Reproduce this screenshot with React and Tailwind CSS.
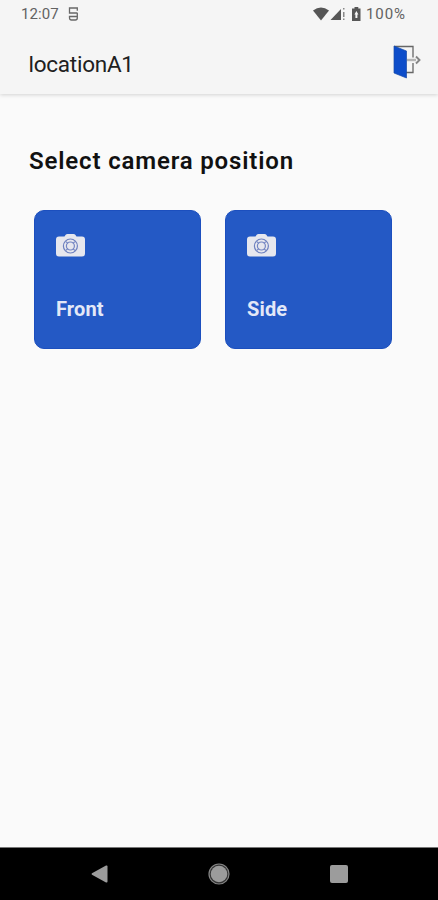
function Camera() {
  return (
    <svg className="block h-6 w-[29px]" viewBox="0 0 29 24" fill="none">
      <path d="M3 2.500h5.500l1.200-1.700Q10.300 0 11.500 0h6Q18.700 0 19.300.8l1.200 1.700H26q3 0 3 3V19.500q0 3-3 3H3q-3 0-3-3V5.500q0-3 3-3Z" fill="#e6e7ee" />
      <circle cx="14.4" cy="12" r="7" stroke="#6d80bf" strokeWidth="1.2" />
      <circle cx="14.4" cy="12" r="4" stroke="#7385c2" strokeWidth="1.2" />
      <path d="m10 7.600 2 2m5 5 2 2M18.800 7.600l-2 2M10 16.400l2-2" stroke="#7385c2" strokeWidth="1.1" />
    </svg>
  );
}

function Card({ label }) {
  return (
    <button className="flex h-[139px] w-[167px] flex-col items-start rounded-[10px] border border-[#1c4fbe] bg-[#2459c5] pt-[23px] pl-[21px] text-left">
      <Camera />
      <span className="mt-[39px] text-[20px] leading-6 font-bold tracking-[0.15px] text-[#e3e8f7]">{label}</span>
    </button>
  );
}

function StatusBar() {
  return (
    <div className="flex h-7 items-center justify-between pr-[31px] pl-[21px] text-[15px] leading-none text-[#626262]">
      <div className="flex items-center gap-[9px]">
        <span className="w-[38px] tracking-[0.1px]">12:07</span>
        <svg className="h-[14px] w-[11px]" viewBox="0 0 11 14" fill="none" stroke="#686868" strokeWidth="1.3">
          <path d="M9.300 3.800V1H1.500v5h8M9.300 6v5q0 2-2 2H3.500q-2 0-2-2V9.500h7.800" />
        </svg>
      </div>
      <div className="flex items-center">
        <svg className="h-[14px] w-[54px]" viewBox="0 0 54 14" fill="#565656">
          <path d="M0 3.500Q8-2.300 16 3.500L8 13.500Z" />
          <path d="M17.500 13 28 2V13Z" />
          <path d="M30 1h1.500v1.500H30zM30 5h1.500v5H30zM30 11.500h1.500V13H30z" fill="#888888" />
          <path fillRule="evenodd" d="M41.500 0h3.800v1.500h2.200V14h-8.500V1.500h2.500ZM43.400 4 41.400 7.600h1V11h2V7.600h1Z" />
        </svg>
        <span className="ml-[-1px] w-[41px] text-[15px] tracking-[0.9px]">100%</span>
      </div>
    </div>
  );
}

function ExitDoor() {
  return (
    <svg className="h-[34px] w-7" viewBox="0 0 28 34" fill="none">
      <path d="M1 1.500h19v11M20 18v9.500h-7" stroke="#666666" strokeWidth="1.3" />
      <path d="M14 15h9" stroke="#b5b5b5" strokeWidth="2.400" />
      <path d="m23 11.500 3.500 3.500-3.500 3.500" stroke="#858585" strokeWidth="1.900" />
      <path d="M1 1 13.500 6v27L1 28Z" fill="#0d4dca" stroke="#174ba8" strokeWidth=".7" />
    </svg>
  );
}

export default function App() {
  return (
    <div className="flex h-[900px] w-[438px] flex-col overflow-hidden bg-[#fafafa] font-['Roboto',sans-serif]">
      <header className="h-[94px] shrink-0 bg-[#f5f5f5] shadow-[0_1px_4px_rgba(0,0,0,0.16)]">
        <StatusBar />
        <div className="flex items-start justify-between pr-[17px] pl-[28.500px]">
          <h1 className="mt-[21px] text-[22.5px] leading-[30px] tracking-[-0.25px] text-[#202020]">locationA1</h1>
          <button className="mt-[17px]"><ExitDoor /></button>
        </div>
      </header>
      <main className="grow pt-[50px]">
        <h2 className="ml-[29px] text-[24px] leading-[34px] font-semibold tracking-[0.84px] text-[#111111]">Select camera position</h2>
        <div className="mt-8 ml-[34px] flex gap-6">
          <Card label="Front" />
          <Card label="Side" />
        </div>
      </main>
      <nav className="flex h-[53px] shrink-0 items-center justify-between border-t border-[#777777] bg-black pr-[90px] pl-[91px]">
        <svg className="h-[18px] w-[17px]" viewBox="0 0 17 18"><path d="M1 8.300 15 .6q1.500-.5 1.500 1v14.800q0 1.500-1.500 1L1 9.700q-1-.7 0-1.400Z" fill="#9c9c9c" /></svg>
        <svg className="h-[22px] w-[22px]" viewBox="0 0 22 22"><circle cx="11" cy="11" r="10" fill="#333333" stroke="#858585" strokeWidth="1.200" /><circle cx="11" cy="11" r="8.300" fill="#9c9c9c" /></svg>
        <div className="h-[18px] w-[18px] rounded-[2px] bg-[#9c9c9c]" />
      </nav>
    </div>
  );
}
